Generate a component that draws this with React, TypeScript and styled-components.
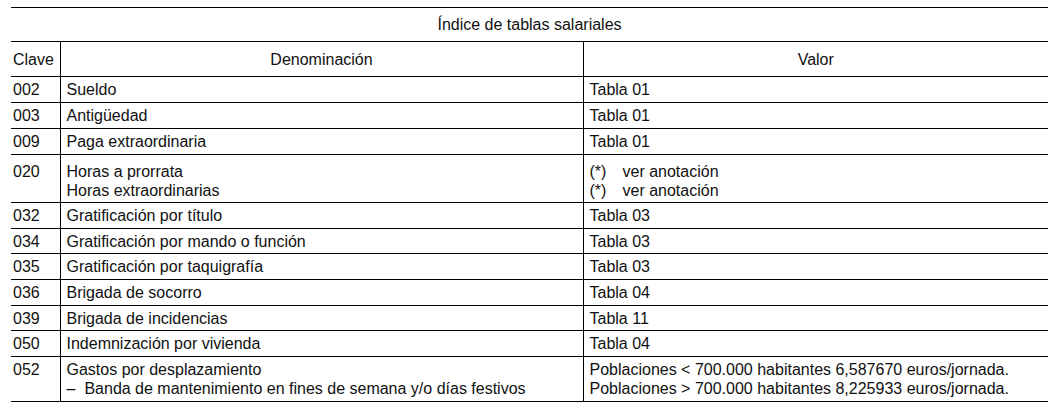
import styled, { createGlobalStyle } from "styled-components";

const GlobalStyle = createGlobalStyle`
  html, body {
    margin: 0;
    background: #ffffff;
  }
  body {
    padding: 7px 9px 0 11px;
    font-family: "Liberation Sans", Arial, sans-serif;
    color: #111111;
  }
`;

const Table = styled.table`
  width: 1037px;
  border-collapse: collapse;
  table-layout: fixed;
  font-size: 16px;
  line-height: 19px;
`;

const TitleCell = styled.th`
  height: 33px;
  padding: 0;
  font-weight: normal;
  text-align: center;
  border-top: 1px solid #000;
  border-bottom: 1px solid #000;
`;

const HeaderCell = styled.th<{ $first?: boolean }>`
  height: 34px;
  padding: 0 2px;
  font-weight: normal;
  text-align: ${({ $first }) => ($first ? "left" : "center")};
  border-bottom: 1px solid #000;
  border-left: ${({ $first }) => ($first ? "none" : "1px solid #000")};
`;

const Cell = styled.td<{ $key?: boolean; $top?: number; $bottom?: number }>`
  vertical-align: top;
  padding: ${({ $top = 3, $bottom = 3 }) => `${$top}px 4px ${$bottom}px`};
  padding-left: ${({ $key }) => ($key ? "2px" : "6px")};
  border-bottom: 1px solid #000;
  border-left: ${({ $key }) => ($key ? "none" : "1px solid #000")};
  white-space: nowrap;
`;

const Line = styled.div`
  display: block;
`;

const Note = styled.div`
  display: grid;
  grid-template-columns: 33px auto;
`;

const Dash = styled.span`
  margin-right: 9px;
`;

type Row = {
  code: string;
  name: string[];
  value: string[];
  note?: boolean;
  top?: number;
  bottom?: number;
  dash?: boolean;
};

const rows: Row[] = [
  { code: "002", name: ["Sueldo"], value: ["Tabla 01"] },
  { code: "003", name: ["Antigüedad"], value: ["Tabla 01"] },
  { code: "009", name: ["Paga extraordinaria"], value: ["Tabla 01"] },
  {
    code: "020",
    name: ["Horas a prorrata", "Horas extraordinarias"],
    value: ["ver anotación", "ver anotación"],
    note: true,
    top: 7,
    bottom: 2,
  },
  { code: "032", name: ["Gratificación por título"], value: ["Tabla 03"] },
  { code: "034", name: ["Gratificación por mando o función"], value: ["Tabla 03"], bottom: 2 },
  { code: "035", name: ["Gratificación por taquigrafía"], value: ["Tabla 03"] },
  { code: "036", name: ["Brigada de socorro"], value: ["Tabla 04"] },
  { code: "039", name: ["Brigada de incidencias"], value: ["Tabla 11"], bottom: 2 },
  { code: "050", name: ["Indemnización por vivienda"], value: ["Tabla 04"] },
  {
    code: "052",
    name: ["Gastos por desplazamiento", "Banda de mantenimiento en fines de semana y/o días festivos"],
    value: [
      "Poblaciones < 700.000 habitantes 6,587670 euros/jornada.",
      "Poblaciones > 700.000 habitantes 8,225933 euros/jornada.",
    ],
    dash: true,
    top: 3,
    bottom: 3,
  },
];

export default function App() {
  return (
    <>
      <GlobalStyle />
      <Table>
        <colgroup>
          <col style={{ width: 49 }} />
          <col style={{ width: 523 }} />
          <col />
        </colgroup>
        <thead>
          <tr>
            <TitleCell colSpan={3}>Índice de tablas salariales</TitleCell>
          </tr>
          <tr>
            <HeaderCell $first>Clave</HeaderCell>
            <HeaderCell>Denominación</HeaderCell>
            <HeaderCell>Valor</HeaderCell>
          </tr>
        </thead>
        <tbody>
          {rows.map((r) => (
            <tr key={r.code}>
              <Cell $key $top={r.top} $bottom={r.bottom}>
                {r.code}
              </Cell>
              <Cell $top={r.top} $bottom={r.bottom}>
                {r.name.map((n, i) => (
                  <Line key={i}>
                    {r.dash && i === 1 && <Dash>–</Dash>}
                    {n}
                  </Line>
                ))}
              </Cell>
              <Cell $top={r.top} $bottom={r.bottom}>
                {r.value.map((v, i) =>
                  r.note ? (
                    <Note key={i}>
                      <span>(*)</span>
                      <span>{v}</span>
                    </Note>
                  ) : (
                    <Line key={i}>{v}</Line>
                  )
                )}
              </Cell>
            </tr>
          ))}
        </tbody>
      </Table>
    </>
  );
}
